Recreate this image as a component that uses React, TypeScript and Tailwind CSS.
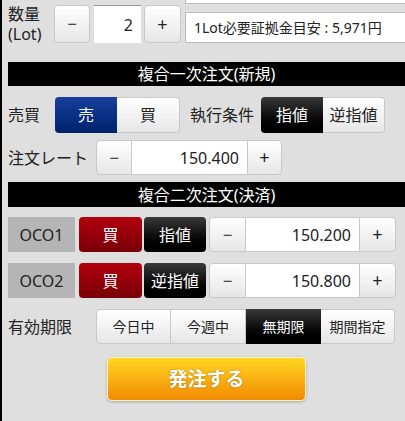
import React from 'react'

const font = { fontFamily: '"Noto Sans", "Noto Sans CJK JP", sans-serif' }

const whiteBtn =
  'flex items-center justify-center bg-gradient-to-b from-white to-[#e6e6e6] border border-[#c8c8c8] text-[#222]'

function Stepper({ value, inputW, minusW = 36, plusW = 36 }: { value: string; inputW: string; minusW?: number; plusW?: number }) {
  return (
    <div className="flex h-full">
      <div className={`${whiteBtn} rounded-l-[4px] text-[17px]`} style={{ width: minusW }}>−</div>
      <div className={`${inputW} bg-white border-y border-[#c8c8c8] flex items-center justify-end pr-[8px] text-[16px] text-[#222]`}>
        {value}
      </div>
      <div className={`${whiteBtn} rounded-r-[4px] text-[18px]`} style={{ width: plusW }}>+</div>
    </div>
  )
}

function Header({ children }: { children: React.ReactNode }) {
  return (
    <div className="bg-black text-white text-[16px] flex items-center justify-center">{children}</div>
  )
}

export default function App() {
  return (
    <div style={font} className="w-[405px] h-[421px] bg-[#dfdfdf] border-l-2 border-black overflow-hidden pl-[6px] text-[#222]">
      {/* 数量 */}
      <div className="flex h-[43px]">
        <div className="w-[46px] pt-[4px] text-[16px] leading-[20px]">
          数量
          <br />
          (Lot)
        </div>
        <div className={`${whiteBtn} mt-[5px] h-[38px] w-[36px] rounded-[4px] text-[17px]`}>−</div>
        <div className="mt-[5px] ml-[4px] h-[38px] w-[47px] bg-white border-t border-[#999] flex items-center justify-end pr-[8px] text-[16px]">
          2
        </div>
        <div className={`${whiteBtn} mt-[5px] ml-[3px] h-[38px] w-[37px] rounded-[4px] text-[18px]`}>+</div>
        <div className="ml-[4px] flex-1 flex flex-col">
          <div className="h-[4px] bg-white border-b border-l border-[#bbb]" />
          <div className="mt-[8px] h-[31px] bg-white border border-r-0 border-[#bbb] flex items-center pl-[8px] text-[14px] whitespace-nowrap">
            1Lot必要証拠金目安 : 5,971円
          </div>
        </div>
      </div>

      <div className="mt-[19px] h-[24px] flex flex-col">
        <Header>
          <span className="h-[24px] flex items-center">複合一次注文(新規)</span>
        </Header>
      </div>

      {/* 売買 / 執行条件 */}
      <div className="mt-[11px] h-[36px] flex items-center text-[16px]">
        <div className="w-[47px]">売買</div>
        <div className="flex h-full">
          <div className="w-[62px] rounded-l-[4px] bg-gradient-to-b from-[#163f9f] to-[#01226b] text-white flex items-center justify-center">売</div>
          <div className={`${whiteBtn} w-[63px] rounded-r-[4px] border-l-0`}>買</div>
        </div>
        <div className="ml-[10px] w-[71px]">執行条件</div>
        <div className="flex h-full">
          <div className="w-[62px] rounded-l-[4px] bg-gradient-to-b from-[#3a3a3a] to-black text-white flex items-center justify-center">指値</div>
          <div className={`${whiteBtn} w-[62px] rounded-r-[4px] border-l-0`}>逆指値</div>
        </div>
      </div>

      {/* 注文レート */}
      <div className="mt-[7px] h-[35px] flex items-center text-[16px]">
        <div className="w-[88px]">注文レート</div>
        <Stepper value="150.400" inputW="w-[115px]" plusW={35} />
      </div>

      <div className="mt-[7px] h-[25px] flex flex-col">
        <Header>
          <span className="h-[25px] flex items-center">複合二次注文(決済)</span>
        </Header>
      </div>

      {[
        { name: 'OCO1', type: '指値', rate: '150.200', mt: 'mt-[10px]' },
        { name: 'OCO2', type: '逆指値', rate: '150.800', mt: 'mt-[11px]' },
      ].map((r) => (
        <div key={r.name} className={`${r.mt} h-[35px] flex text-[16px]`}>
          <div className="w-[67px] bg-[#b5b5b5] flex items-center justify-center">{r.name}</div>
          <div className="ml-[4px] w-[63px] rounded-[4px] bg-gradient-to-b from-[#b3000e] to-[#780007] text-white flex items-center justify-center">
            買
          </div>
          <div className="ml-[2px] w-[62px] rounded-[4px] bg-gradient-to-b from-[#3a3a3a] to-black text-white flex items-center justify-center">
            {r.type}
          </div>
          <div className="ml-[3px] h-full">
            <Stepper value={r.rate} inputW="w-[113px]" minusW={37} plusW={37} />
          </div>
        </div>
      ))}

      {/* 有効期限 */}
      <div className="mt-[11px] h-[35px] flex items-center text-[16px]">
        <div className="w-[88px]">有効期限</div>
        <div className="flex h-full text-[14px]">
          <div className={`${whiteBtn} w-[75px] rounded-l-[4px]`}>今日中</div>
          <div className={`${whiteBtn} w-[75px] border-l-0`}>今週中</div>
          <div className="w-[75px] bg-gradient-to-b from-[#3a3a3a] to-black text-white flex items-center justify-center">無期限</div>
          <div className={`${whiteBtn} w-[74px] rounded-r-[4px] border-l-0`}>期間指定</div>
        </div>
      </div>

      <div className="mt-[13px] ml-[99px] w-[199px] h-[44px] rounded-[5px] border border-[#fff3c0] bg-gradient-to-b from-[#ffd622] to-[#f18a00] shadow-[0_1px_3px_rgba(0,0,0,0.25)] flex items-center justify-center text-white font-bold text-[19px] [text-shadow:0_0_2px_rgba(0,0,0,0.35)]">
        発注する
      </div>
    </div>
  )
}
